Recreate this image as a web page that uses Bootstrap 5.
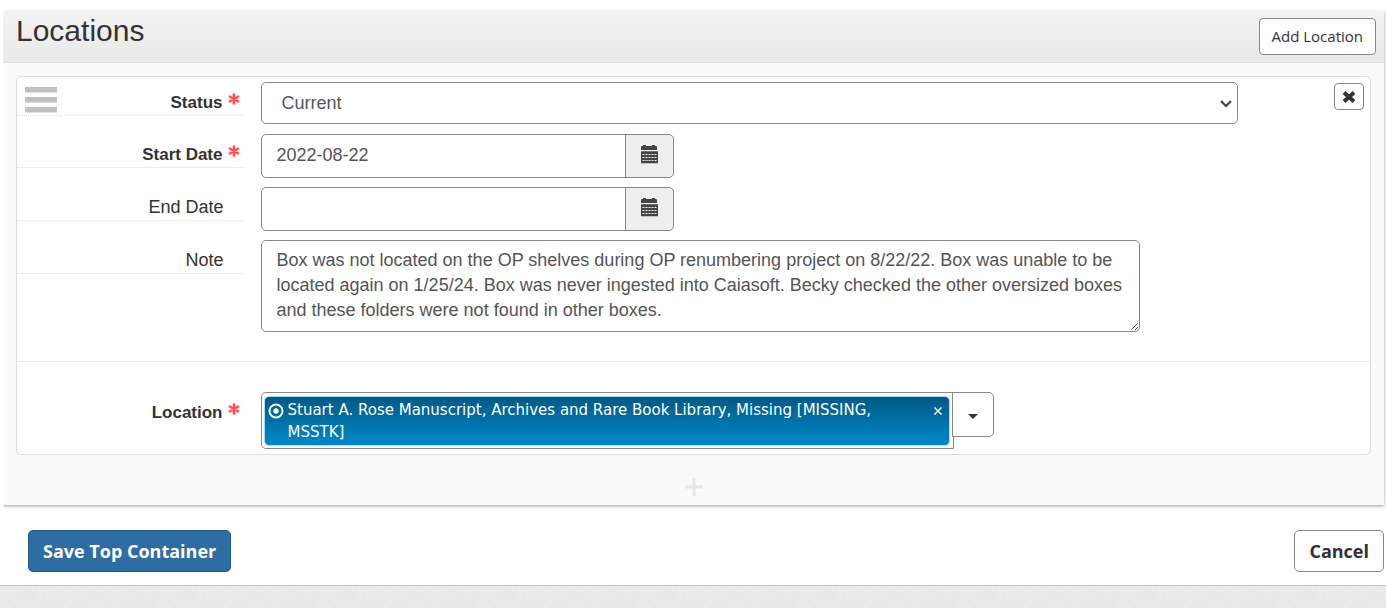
<!DOCTYPE html>
<html lang="en">
<head>
<meta charset="utf-8">
<meta name="viewport" content="width=device-width, initial-scale=1">
<title>Top Container - Locations</title>
<link rel="stylesheet" href="https://cdn.jsdelivr.net/npm/bootstrap@5.3.0/dist/css/bootstrap.min.css">
<style>
body{font-family:"Liberation Sans",Arial,sans-serif;font-size:18px;line-height:25px;color:#333;background-color:#ececec;
background-image:url("data:image/svg+xml,%3Csvg xmlns='http://www.w3.org/2000/svg' width='160' height='160'%3E%3Cfilter id='n'%3E%3CfeTurbulence type='fractalNoise' baseFrequency='.35' numOctaves='2' stitchTiles='stitch'/%3E%3CfeColorMatrix values='0 0 0 0 .6 0 0 0 0 .6 0 0 0 0 .6 .25 0 0 0 -.06'/%3E%3C/filter%3E%3Crect width='160' height='160' filter='url(%23n)'/%3E%3C/svg%3E");}
.page-sheet{background:#fff;border-bottom:1px solid #c4c4c4;box-shadow:0 1px 3px rgba(0,0,0,.15);padding:10px 2px 13px 3px}
.panel{background:#fafafa;box-shadow:0 1px 3px rgba(0,0,0,.4);clip-path:inset(0 -4px -4px 0)}
.panel-head{background:linear-gradient(#f3f3f3,#e9e9e9);border-bottom:1px solid #ddd;padding:8px 8px 7px 13px;border-radius:4px 4px 0 0}
.panel-head h2{font-size:30px;line-height:26px;font-weight:400;margin:0}
.btn-line{--bs-btn-color:#333;--bs-btn-bg:#fff;--bs-btn-border-color:#888;--bs-btn-hover-bg:#eee;--bs-btn-hover-border-color:#777;--bs-btn-border-radius:4px;font-family:"Open Sans",sans-serif}
.btn-add{font-size:15px;line-height:23px;padding:6px 12px}
.panel-main{padding:13px 13px 0}
.record{background:#fff;border:1px solid #ddd;border-radius:5px;padding:5px 0}
.grip{left:8px;top:10px;width:32px;height:26px}
.field{display:flex;margin-bottom:10px}
.tag-col{border-bottom:1px dotted #ddd;padding:8px 19px 0 0;height:34px;text-align:right;align-self:flex-start}
.tag-col.no-line{border-color:transparent}
.req{font-size:17px;font-weight:700;padding-right:20px}
.req svg{position:absolute;right:2px;top:10px}
.ctl-col{padding:0 19px 0 18px}
.form-control,.form-select{font-size:18px;line-height:24px;color:#555;border-color:#888;border-radius:5px;padding:8px 15px;background-color:#fff}
.form-select{padding-left:20px;background-position:right 4px center;background-size:14px 14px;
background-image:url("data:image/svg+xml,%3Csvg xmlns='http://www.w3.org/2000/svg' viewBox='0 0 14 14'%3E%3Cpath d='M2 5l5 5 5-5' fill='none' stroke='%23444' stroke-width='2.2'/%3E%3C/svg%3E")}
.date-group{width:413px;max-width:100%;height:43px}
.date-group .form-control{padding-bottom:10px}
.cal-btn{background:#eee;border:1px solid #888;width:49px;padding:0 0 4px;border-radius:5px}
.note-box{width:90%;height:92px;line-height:25px;padding:7px 15px;overflow:hidden}
.rule{border-top:1px solid #e9e9e9;margin:29px 0 30px}
.linker{width:75%}
.token-box{border:1px solid #888;border-radius:5px 0 0 5px;padding:3px 3px 2px 2px;min-height:57px}
.token{background:linear-gradient(#005a86,#0088c8);border:1px solid #a6dcf6;border-radius:5px;color:#fff;font-family:"DejaVu Sans",Verdana,sans-serif;font-size:15px;line-height:22px;padding:2px 6px 2px 3px}
.token-close{background:none;border:0;color:#fff;padding:0;line-height:10px;margin-top:6px}
.btn-drop{width:42px;height:45px;margin-left:-2px;border-radius:0 5px 5px 0;padding:0}
.btn-x{right:6px;top:6px;width:30px;height:27px;padding:0;line-height:0}
.add-plus{border:0;background:none;padding:23px 0 9px;line-height:0;vertical-align:top}
.actions{padding:25px 0 0 25px}
.btn-act{font-family:"Open Sans",sans-serif;font-size:18px;font-weight:700;line-height:24px;padding:8px 14px;border-radius:5px}
.btn-save{--bs-btn-color:#fff;--bs-btn-bg:#2e6da4;--bs-btn-border-color:#265a88;--bs-btn-hover-bg:#265a88;--bs-btn-hover-color:#fff}
</style>
<script src="https://cdn.jsdelivr.net/npm/bootstrap@5.3.0/dist/js/bootstrap.bundle.min.js"></script>
</head>
<body>
<svg class="d-none" xmlns="http://www.w3.org/2000/svg">
<symbol id="star" viewBox="0 0 14 14"><g stroke="#ffb4b4" stroke-width="3.600" stroke-linecap="round"><path d="M7 2.500v9M3 4.700l8 4.600M3 9.300l8-4.600"/></g><g stroke="#fb4a4a" stroke-width="1.900" stroke-linecap="round"><path d="M7 2.500v9M3 4.700l8 4.600M3 9.300l8-4.600"/></g></symbol>
<symbol id="cal" viewBox="0 0 18 19"><path fill="#444" d="M1.500 1H3V0h3v1h6V0h3v1h1.500l.5 1v3H1V2zM1 6.200h17v12H1z"/><path stroke="#eee" stroke-width="1" stroke-dasharray="2 1" d="M2.500 9.500h14M2.500 12.500h14M2.500 15.500h14"/></symbol>
</svg>
<form class="page-sheet">
<section class="panel">
<header class="panel-head d-flex justify-content-between align-items-start">
<h2>Locations</h2>
<button type="button" class="btn btn-line btn-add">Add Location</button>
</header>
<div class="panel-main">
<div class="record position-relative">
<svg class="grip position-absolute" viewBox="0 0 32 26" aria-hidden="true"><path fill="#c0c0c0" d="M0 0h32v5.500H0zM0 10h32v5.500H0zM0 20h32v5.500H0z"/></svg>
<button type="button" class="btn btn-line btn-x position-absolute" aria-label="Remove location"><svg width="14" height="14" viewBox="0 0 14 14"><path d="M2 2.500l10 9M12 2.500l-10 9" stroke="#333" stroke-width="4"/></svg></button>

<div class="field">
<label for="status" class="col-2 tag-col req position-relative">Status<svg width="14" height="14"><use href="#star"/></svg></label>
<div class="col-9 ctl-col"><select id="status" class="form-select"><option>Current</option><option>Previous</option></select></div>
</div>
<div class="field">
<label for="start" class="col-2 tag-col req position-relative">Start Date<svg width="14" height="14"><use href="#star"/></svg></label>
<div class="col-9 ctl-col"><div class="input-group date-group"><input id="start" type="text" class="form-control" value="2022-08-22"><button type="button" class="cal-btn" aria-label="Pick start date"><svg width="18" height="19"><use href="#cal"/></svg></button></div></div>
</div>
<div class="field">
<label for="end" class="col-2 tag-col">End Date</label>
<div class="col-9 ctl-col"><div class="input-group date-group"><input id="end" type="text" class="form-control"><button type="button" class="cal-btn" aria-label="Pick end date"><svg width="18" height="19"><use href="#cal"/></svg></button></div></div>
</div>
<div class="field mb-0">
<label for="note" class="col-2 tag-col">Note</label>
<div class="col-9 ctl-col"><textarea id="note" class="form-control note-box">Box was not located on the OP shelves during OP renumbering project on 8/22/22. Box was unable to be located again on 1/25/24. Box was never ingested into Caiasoft. Becky checked the other oversized boxes and these folders were not found in other boxes.</textarea></div>
</div>
<div class="rule"></div>
<div class="field mb-0">
<label for="location" class="col-2 tag-col no-line req position-relative">Location<svg width="14" height="14"><use href="#star"/></svg></label>
<div class="col-9 ctl-col">
<div class="linker d-flex align-items-start">
<div class="token-box flex-grow-1">
<div class="token d-flex align-items-start">
<svg class="flex-shrink-0 mt-1 me-1" width="16" height="16" viewBox="0 0 16 16"><circle cx="8" cy="8" r="6.500" fill="none" stroke="#fff" stroke-width="2"/><circle cx="8" cy="8" r="2.700" fill="#fff"/></svg>
<span class="flex-grow-1 pe-5">Stuart A. Rose Manuscript, Archives and Rare Book Library, Missing [MISSING, MSSTK]</span>
<button type="button" class="token-close" aria-label="Remove"><svg width="10" height="10" viewBox="0 0 10 10"><path d="M1.500 1.500l7 7M8.500 1.500l-7 7" stroke="#fff" stroke-width="1.500"/></svg></button>
</div>
</div>
<button type="button" id="location" class="btn btn-line btn-drop flex-shrink-0" aria-label="Browse locations"><svg width="10" height="5" viewBox="0 0 10 5"><path fill="#333" d="M0 0h10L5 5z"/></svg></button>
</div>
</div>
</div>
</div>
<div class="d-flex justify-content-center"><button type="button" class="add-plus" aria-label="Add another location"><svg width="18" height="18" viewBox="0 0 18 18"><path d="M9 0v18M0 9h18" stroke="#e6e6e6" stroke-width="3"/></svg></button></div>
</div>
</section>
<div class="actions d-flex justify-content-between">
<button type="submit" class="btn btn-save btn-act">Save Top Container</button>
<button type="button" class="btn btn-line btn-act">Cancel</button>
</div>
</form>
</body>
</html>
